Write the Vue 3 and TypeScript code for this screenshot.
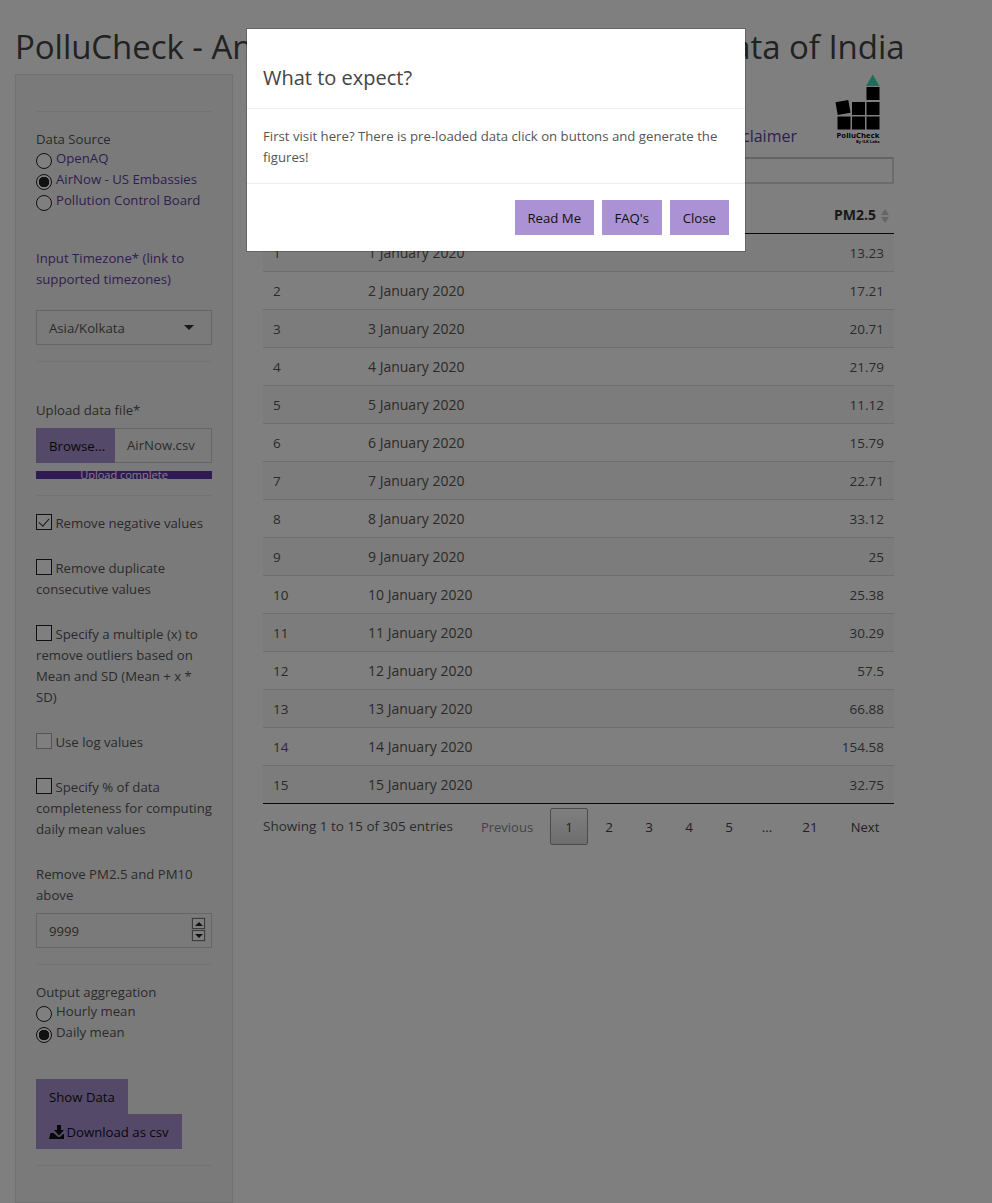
<script setup lang="ts">
const rows: [number, string, string][] = [
  [1, '1 January 2020', '13.23'], [2, '2 January 2020', '17.21'], [3, '3 January 2020', '20.71'],
  [4, '4 January 2020', '21.79'], [5, '5 January 2020', '11.12'], [6, '6 January 2020', '15.79'],
  [7, '7 January 2020', '22.71'], [8, '8 January 2020', '33.12'], [9, '9 January 2020', '25'],
  [10, '10 January 2020', '25.38'], [11, '11 January 2020', '30.29'], [12, '12 January 2020', '57.5'],
  [13, '13 January 2020', '66.88'], [14, '14 January 2020', '154.58'], [15, '15 January 2020', '32.75'],
]
const pages = ['1', '2', '3', '4', '5', '…', '21']
</script>

<template>
  <div class="page">
    <h1 class="title">PolluCheck - Analysis of Air Quality Observed Data of India</h1>
    <div class="layout">
      <aside class="well">
        <hr class="rule first" />
        <div class="label">Data Source</div>
        <div class="opts">
          <label class="opt link"><input type="radio" name="src" />OpenAQ</label>
          <label class="opt link"><input type="radio" name="src" checked />AirNow - US Embassies</label>
          <label class="opt link"><input type="radio" name="src" />Pollution Control Board</label>
        </div>

        <a class="link tz">Input Timezone* (link to supported timezones)</a>
        <div class="field select">Asia/Kolkata<span class="caret"></span></div>
        <hr class="rule sel-rule" />

        <div class="label upload">Upload data file*</div>
        <div class="file">
          <span class="btn browse">Browse...</span>
          <span class="filename">AirNow.csv</span>
        </div>
        <div class="progress">Upload complete</div>
        <hr class="rule prog-rule" />

        <label class="check c1"><input type="checkbox" checked /> Remove negative values</label>
        <label class="check"><input type="checkbox" /> Remove duplicate consecutive values</label>
        <label class="check"><input type="checkbox" /> Specify a multiple (x) to remove outliers based on Mean and SD (Mean + x * SD)</label>
        <label class="check"><input type="checkbox" disabled /> Use log values</label>
        <label class="check"><input type="checkbox" /> Specify % of data completeness for computing daily mean values</label>

        <div class="label above">Remove PM2.5 and PM10 above</div>
        <div class="field number">9999
          <span class="spin"><i class="up"></i><i class="down"></i></span>
        </div>
        <hr class="rule num-rule" />

        <div class="label">Output aggregation</div>
        <div class="opts">
          <label class="opt"><input type="radio" name="agg" />Hourly mean</label>
          <label class="opt"><input type="radio" name="agg" checked />Daily mean</label>
        </div>

        <div class="actions">
          <span class="btn dark">Show Data</span>
          <span class="btn dark">
            <svg class="dl" viewBox="0 0 15 14"><path d="M8 0h4v5h3l-5 5.5-5-5.5h3zM1.5 8h3l4.5 4h2l3-3h1v5H0z" /></svg>
            Download as csv
          </span>
        </div>
        <hr class="rule end-rule" />
      </aside>

      <main class="main">
        <div class="top">
          <nav class="tabs"><a class="link tab">Read Me</a><a class="link tab">Disclaimer</a></nav>
          <svg class="logo" viewBox="0 0 48 72" width="48" height="72">
            <polygon points="32,12 45.5,12 38.7,0.5" fill="#46d8b8" />
            <rect x="32.5" y="13" width="13" height="13" />
            <rect x="32.5" y="28" width="13" height="13" />
            <rect x="32.5" y="42.5" width="13" height="13" />
            <rect x="18" y="28" width="13" height="13" />
            <rect x="18" y="42.5" width="13" height="13" />
            <rect x="3.5" y="42.5" width="13" height="13" />
            <rect x="2.5" y="27" width="13" height="13" transform="rotate(-10 9 33.5)" />
            <text x="45.5" y="63.5" text-anchor="end" class="logo-a">PolluCheck</text>
            <text x="45.5" y="69" text-anchor="end" class="logo-b">By ILK Labs</text>
          </svg>
        </div>
        <div class="panel"></div>
        <table class="grid">
          <thead>
            <tr>
              <th class="c-n">#</th>
              <th class="c-d">Date</th>
              <th class="c-v">PM2.5<span class="sort"><i class="s-up"></i><i class="s-down"></i></span></th>
            </tr>
          </thead>
          <tbody>
            <tr v-for="r in rows" :key="r[0]">
              <td class="c-n">{{ r[0] }}</td>
              <td class="c-d">{{ r[1] }}</td>
              <td class="c-v">{{ r[2] }}</td>
            </tr>
          </tbody>
        </table>
        <div class="foot">
          <span class="info">Showing 1 to 15 of 305 entries</span>
          <div class="pager">
            <span class="pg prev">Previous</span>
            <span v-for="(p, i) in pages" :key="p" class="pg" :class="{ cur: i === 0, gap: p === '…', wide: p === '21' }">{{ p }}</span>
            <span class="pg next">Next</span>
          </div>
        </div>
      </main>
    </div>

    <div class="backdrop">
      <div class="modal">
        <header class="m-head"><h4>What to expect?</h4></header>
        <div class="m-body">First visit here? There is pre-loaded data click on buttons and generate the figures!</div>
        <footer class="m-foot">
          <span class="btn light readme">Read Me</span>
          <span class="btn light faq">FAQ's</span>
          <span class="btn light">Close</span>
        </footer>
      </div>
    </div>
  </div>
</template>

<style>
html, body { margin: 0; background: #fff; overflow: hidden; }
</style>

<style scoped>
.page {
  height: 1203px;
  overflow: hidden;
  font-family: "Open Sans", "Noto Sans", sans-serif;
  font-size: 13.2px;
  line-height: 21px;
  color: #555;
  padding: 0 15px;
  box-sizing: border-box;
}
.title {
  margin: 0;
  padding-top: 23px;
  font-size: 33px;
  line-height: 48px;
  font-weight: 400;
  letter-spacing: -0.05px;
  color: #444;
  white-space: nowrap;
  height: 74px;
  box-sizing: border-box;
}
.layout { display: flex; }
.well {
  width: 218px;
  height: 1129px;
  flex: none;
  box-sizing: border-box;
  background: #f5f5f5;
  border: 1px solid #e3e3e3;
  padding: 0 20px;
}
.rule { border: 0; border-top: 1px solid #e6e6e6; margin: 0; }
.first { margin-top: 36px; margin-bottom: 17px; }
.label { color: #555; }
.link { color: #5d3fa0; }
.opts { margin-top: -2px; }
.opt { display: flex; height: 21px; align-items: flex-start; }
.opt input {
  appearance: none;
  flex: none;
  width: 16px; height: 16px;
  margin: 5px 4px 0 0;
  border: 1px solid #222;
  border-radius: 50%;
  background: #fff;
  box-sizing: border-box;
}
.opt input:checked { background: radial-gradient(circle, #222 0 5px, #fff 5.5px); }
.tz { display: block; margin-top: 37px; }
.field {
  border: 1px solid #ccc;
  box-sizing: border-box;
  height: 35px;
  padding: 0 12px;
  line-height: 35px;
  position: relative;
}
.select { margin-top: 20px; }
.caret {
  position: absolute; right: 17px; top: 14px;
  border: 5px solid transparent; border-top-color: #333; border-bottom: 0;
}
.sel-rule { margin-top: 16px; }
.upload { margin-top: 38px; }
.file { display: flex; height: 35px; margin-top: 7px; }
.btn {
  display: inline-block;
  box-sizing: border-box;
  height: 35px;
  line-height: 36px;
  padding: 0 13px;
  color: #111;
  white-space: nowrap;
}
.browse { background: #ab92d4; flex: none; width: 79px; }
.filename { flex: 1; border: 1px solid #ccc; border-left: 0; padding: 0 12px; line-height: 33px; }
.progress {
  height: 8px; margin-top: 8px; background: #5e35a8;
  color: #fff; text-align: center; line-height: 8px; overflow: hidden;
  font-size: 11px;
}
.prog-rule { margin-top: 16px; }
.check { display: block; margin-bottom: 24px; color: #555; }
.c1 { margin-top: 17px; }
.check input {
  appearance: none;
  width: 16px; height: 16px;
  margin: 0;
  vertical-align: -2px;
  border: 1px solid #222;
  background: #fff;
  box-sizing: border-box;
  position: relative;
}
.check input:checked::after {
  content: "";
  position: absolute; left: 4px; top: 1px;
  width: 5px; height: 9px;
  border: solid #333; border-width: 0 1.5px 1.5px 0;
  transform: rotate(42deg);
}
.check input:disabled { border-color: #aaa; }
.number { margin-top: 7px; }
.spin {
  position: absolute; right: 5px; top: 3px; width: 15px; height: 25px;
  background: #e4e4e4; box-sizing: border-box; display: flex; flex-direction: column;
  gap: 1px; padding: 1px;
}
.spin i { flex: 1; background: #fff; position: relative; border: 1px solid #777; }
.spin i::after {
  content: ""; position: absolute; left: 1.5px; top: 3px;
  border: 4px solid transparent; border-top: 0; border-bottom: 4px solid #222;
}
.spin .down::after { border-bottom: 0; border-top: 4px solid #222; }
.num-rule { margin-top: 16px; margin-bottom: 17px; }
.actions { margin-top: 36px; display: flex; flex-direction: column; align-items: flex-start; }
.dark { background: #ab92d4; }
.dl { width: 15px; height: 14px; vertical-align: -2px; fill: #111; margin-right: -1px; }
.end-rule { margin-top: 16px; }

.main { flex: none; width: 661px; padding-left: 30px; box-sizing: border-box; }
.top { display: flex; justify-content: flex-end; align-items: flex-end; height: 83px; position: relative; }
.tabs { display: flex; gap: 30px; margin-right: 37px; margin-bottom: 9px; font-size: 16px; line-height: 24px; }
.logo { margin-right: 12px; margin-bottom: 11px; fill: #000; }
.logo-a { font-family: "Open Sans", sans-serif; font-size: 7.6px; font-weight: 700; letter-spacing: .1px; }
.logo-b { font-family: "Open Sans", sans-serif; font-size: 4.2px; font-weight: 700; }
.panel { height: 27px; width: 631px; box-sizing: border-box; border: 2px solid #d8d8d8; border-top-color: #c8c8c8; }
.grid {
  width: 631px; margin-top: 12px;
  border-collapse: separate; border-spacing: 0;
  table-layout: fixed;
  color: #555;
  font-size: 13.5px;
}
.grid th {
  height: 38px; padding: 0 10px; box-sizing: border-box;
  border-bottom: 1px solid #111; text-align: left; color: #333; font-weight: 700;
  font-size: 14px;
}
.grid td { height: 38px; padding: 1px 10px 0; box-sizing: border-box; border-bottom: 1px solid #ddd; }
.grid td.c-d { font-size: 14px; padding-top: 0; }
.grid tbody tr:nth-child(odd) td { background: #f9f9f9; }
.grid tbody tr:last-child td { border-bottom-color: #111; }
.c-n { width: 95px; }
.c-v { width: 140px; }
.grid .c-v { text-align: right; }
.grid th.c-v { padding-right: 5px; }
.sort { display: inline-flex; flex-direction: column; gap: 2px; margin-left: 5px; vertical-align: middle; }
.sort i { width: 0; height: 0; border: 4px solid transparent; }
.sort .s-up { border-top: 0; border-bottom: 6px solid #ccc; }
.sort .s-down { border-bottom: 0; border-top: 6px solid #ccc; }
.foot { display: flex; justify-content: space-between; align-items: center; width: 631px; margin-top: 4px; font-size: 13.5px; }
.info { color: #555; }
.pager { display: flex; gap: 2px; }
.pg { box-sizing: border-box; width: 38px; height: 37px; line-height: 37px; text-align: center; color: #444; border: 1px solid transparent; }
.prev { color: #888; width: 82px; font-size: 13px; }
.next { width: 58px; font-size: 13px; }
.cur { background: linear-gradient(#fff, #dcdcdc); border-color: #979797; border-radius: 2px; }
.gap { width: 34px; }
.wide { width: 48px; }

.backdrop { position: fixed; inset: 0; background: rgba(0, 0, 0, .5); }
.modal {
  width: 500px; height: 224px; margin: 28px 0 0 246px; box-sizing: border-box;
  background: #fff; border: 1px solid rgba(0, 0, 0, .2); background-clip: padding-box;
  display: flex; flex-direction: column;
}
.m-head { height: 80px; box-sizing: border-box; border-bottom: 1px solid #eee; padding: 35px 16px 0; }
.m-head h4 { margin: 0; font-size: 20px; line-height: 28px; font-weight: 400; color: #444; }
.m-body { height: 75px; box-sizing: border-box; padding: 17px 16px 0; border-bottom: 1px solid #eee; color: #555; }
.m-foot { display: flex; justify-content: flex-end; gap: 8px; padding: 16px; }
.light { background: #ab92d4; }
.readme { width: 79px; padding: 0; text-align: center; }
.faq { width: 60px; padding: 0; text-align: center; }
</style>
